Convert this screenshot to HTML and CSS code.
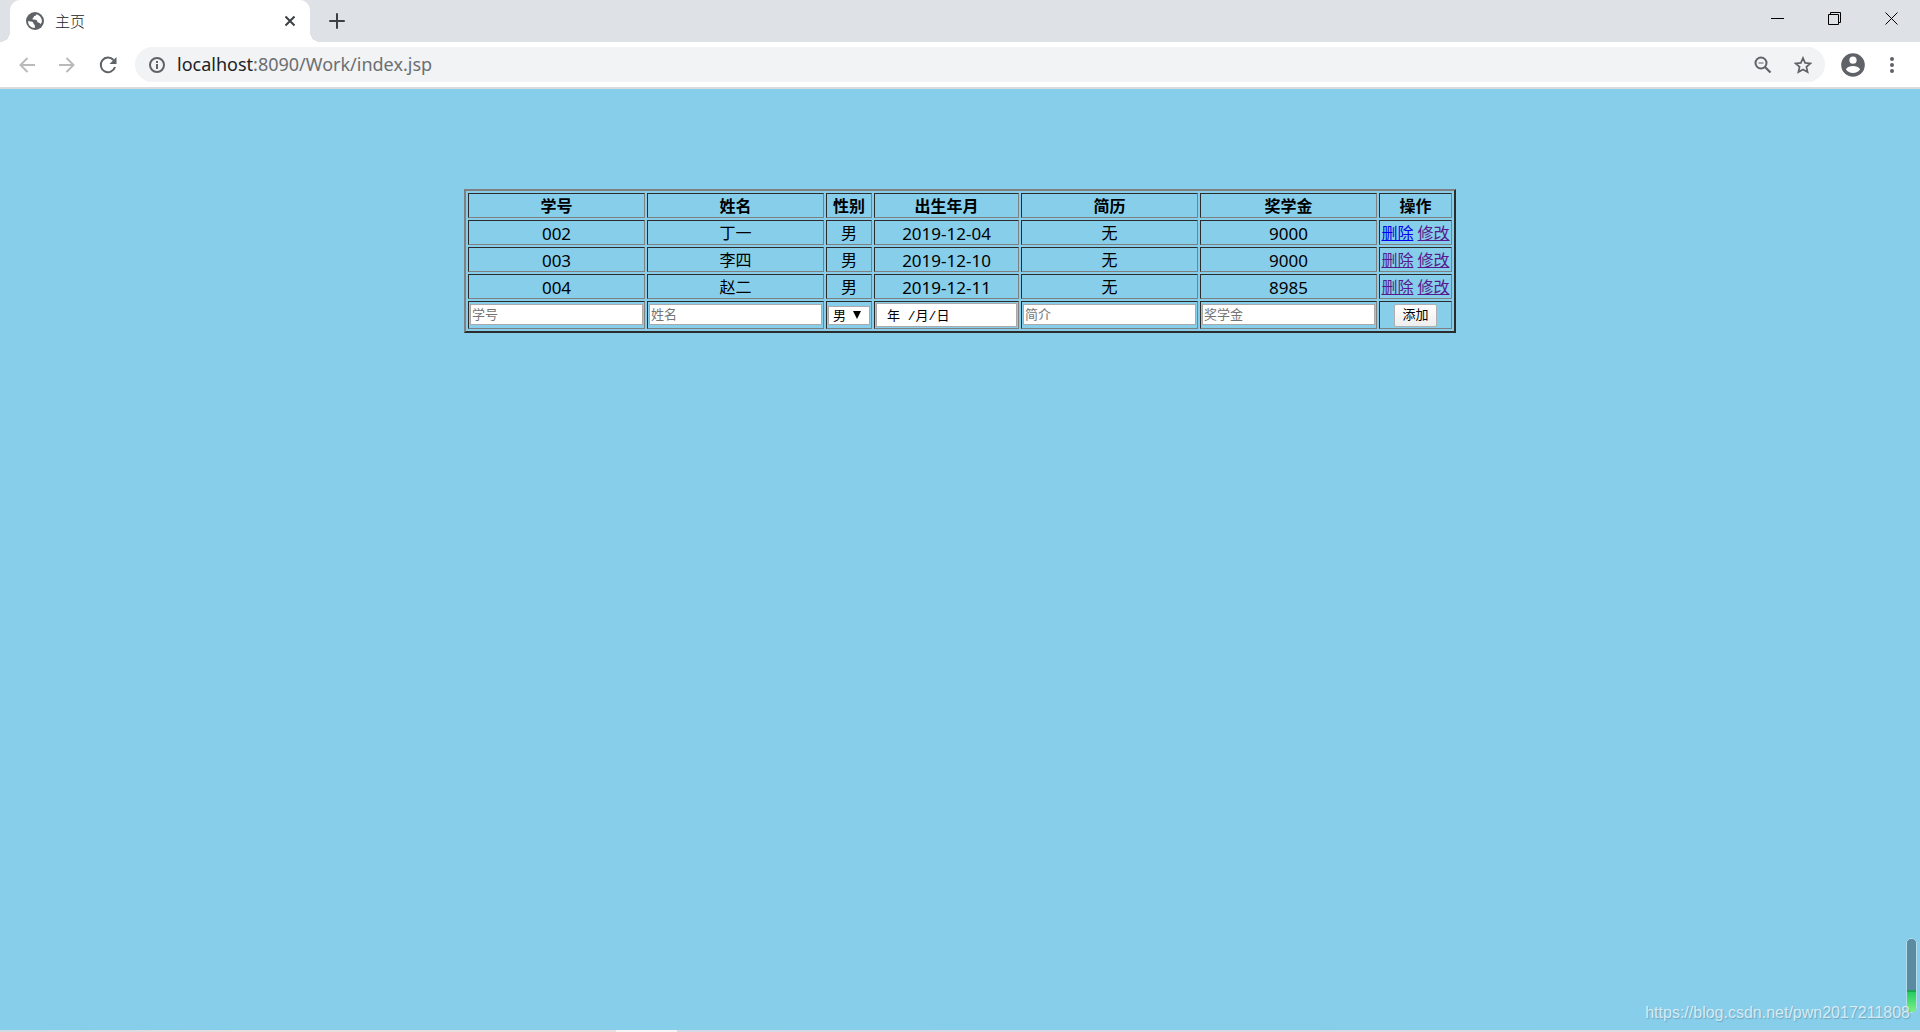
FILE: index.html
```html
<!DOCTYPE html>
<html lang="zh-CN">
<head>
<meta charset="utf-8">
<title>主页</title>
<link rel="stylesheet" href="styles.css">
</head>
<body>
<div class="window">
  <header class="tabstrip">
    <div class="tab">
      <svg class="globe" viewBox="0 0 18 18" width="18" height="18"><circle cx="9" cy="9" r="9" fill="#5f6368"/><path d="M2 9.2c2 .1 4.200 .1 5 1 .7.8.2 1.800 1.200 2.300.8.5.8 1.300.6 3.400C4.900 15.900 2 12.800 2 9.200zM10.500 2.200c-.3 1.300-.7 1.500-2 1.800-.9.300-.6 1.500-1.500 1.900-.7.4-.6 1.400.1 1.600 1.400.3 3.200-.1 3.900 1.100.6 1-.1 1.900 1.300 2 1.200.1 1.700.6 2 1.700 1-1.200 1.600-2 1.600-3.300 0-3.300-2.300-6-5.400-6.800z" fill="#fff"/></svg>
      <span class="tab-title">主页</span>
      <button class="icon-button" aria-label="关闭标签页"><svg viewBox="0 0 12 12" width="12" height="12"><path d="M1.500 1.500l9 9M10.500 1.500l-9 9" stroke="#3c4043" stroke-width="2"/></svg></button>
    </div>
    <button class="icon-button new-tab" aria-label="新标签页"><svg viewBox="0 0 16 16" width="16" height="16"><path d="M8 1v14M1 8h14" stroke="#3c4043" stroke-width="2" stroke-linecap="round"/></svg></button>
    <div class="window-buttons">
      <button class="icon-button" aria-label="最小化"><svg viewBox="0 0 13 13" width="13" height="13"><path d="M0 6.500h13" stroke="#000"/></svg></button>
      <button class="icon-button" aria-label="还原"><svg viewBox="0 0 13 13" width="13" height="13"><path d="M.5 2.500h10v10H.5zM2.500 2.500v-2h10v10h-2" fill="none" stroke="#000"/></svg></button>
      <button class="icon-button" aria-label="关闭"><svg viewBox="0 0 13 13" width="13" height="13"><path d="M.5.5l12 12M12.500.5l-12 12" stroke="#000"/></svg></button>
    </div>
  </header>
  <nav class="toolbar">
    <button class="icon-button" aria-label="后退"><svg viewBox="0 0 16 16" width="16" height="16"><path d="M16 8H1.500M8.500 1L1.500 8l7 7" fill="none" stroke="#bababa" stroke-width="2"/></svg></button>
    <button class="icon-button" aria-label="前进"><svg viewBox="0 0 16 16" width="16" height="16"><path d="M0 8h14.500M7.500 1l7 7-7 7" fill="none" stroke="#bababa" stroke-width="2"/></svg></button>
    <button class="icon-button" aria-label="重新加载"><svg viewBox="0 0 18 18" width="18" height="18"><path d="M14.500 4A7.300 7.300 0 1 0 16 11" fill="none" stroke="#5f6368" stroke-width="2"/><path d="M17.500 1v7h-7z" fill="#5f6368"/></svg></button>
    <div class="address">
      <svg viewBox="0 0 16 16" width="16" height="16"><circle cx="8" cy="8" r="7" fill="none" stroke="#5f6368" stroke-width="2"/><path d="M8 7v5M8 4v2" stroke="#5f6368" stroke-width="2"/></svg>
      <span class="url"><b class="host">localhost</b>:8090/Work/index.jsp</span>
      <button class="icon-button" aria-label="缩放"><svg viewBox="0 0 18 18" width="18" height="18"><circle cx="7" cy="7" r="5.500" fill="none" stroke="#5f6368" stroke-width="2"/><path d="M4.500 7h5" stroke="#5f6368"/><path d="M11 11l5.500 5.500" stroke="#5f6368" stroke-width="2.200"/></svg></button>
      <button class="icon-button" aria-label="收藏"><svg viewBox="0 0 18 18" width="18" height="18"><path d="M9 2l2.100 4.900 5.300.5-4 3.500 1.200 5.200L9 13.400l-4.600 2.700 1.200-5.200-4-3.500 5.300-.5z" fill="none" stroke="#5f6368" stroke-width="1.700"/></svg></button>
    </div>
    <button class="icon-button" aria-label="用户"><svg viewBox="0 0 24 24" width="24" height="24"><circle cx="12" cy="12" r="11.800" fill="#5f6368"/><circle cx="12" cy="7.200" r="3.600" fill="#fff"/><path d="M4.900 16.200c1.400-2.200 4.200-3.300 7.100-3.300s5.700 1.100 7.100 3.300A8.500 8.500 0 0 1 12 20a8.500 8.500 0 0 1-7.100-3.800z" fill="#fff"/></svg></button>
    <button class="icon-button" aria-label="菜单"><svg viewBox="0 0 4 16" width="4" height="16"><g fill="#5f6368"><circle cx="2" cy="2" r="2"/><circle cx="2" cy="8" r="2"/><circle cx="2" cy="14" r="2"/></g></svg></button>
  </nav>
  <main class="page">
    <form class="student-form">
      <table class="students">
        <colgroup><col class="wide"><col class="wide"><col class="sex"><col class="date"><col class="wide"><col class="wide"><col class="actions"></colgroup>
        <tr><th>学号</th><th>姓名</th><th>性别</th><th>出生年月</th><th>简历</th><th>奖学金</th><th>操作</th></tr>
        <tr><td>002</td><td>丁一</td><td>男</td><td>2019-12-04</td><td>无</td><td>9000</td><td class="links"><a class="fresh" href="#">删除</a> <a href="#">修改</a></td></tr>
        <tr><td>003</td><td>李四</td><td>男</td><td>2019-12-10</td><td>无</td><td>9000</td><td class="links"><a href="#">删除</a> <a href="#">修改</a></td></tr>
        <tr><td>004</td><td>赵二</td><td>男</td><td>2019-12-11</td><td>无</td><td>8985</td><td class="links"><a href="#">删除</a> <a href="#">修改</a></td></tr>
        <tr class="entry">
          <td><input class="field" type="text" placeholder="学号" aria-label="学号"></td>
          <td><input class="field" type="text" placeholder="姓名" aria-label="姓名"></td>
          <td><div class="picker"><select class="select" aria-label="性别"><option>男</option><option>女</option></select></div></td>
          <td><input class="field date-field" type="text" value="年 /月/日" aria-label="出生年月"></td>
          <td><input class="field" type="text" placeholder="简介" aria-label="简介"></td>
          <td><input class="field" type="text" placeholder="奖学金" aria-label="奖学金"></td>
          <td><button class="add" type="button">添加</button></td>
        </tr>
      </table>
    </form>
  </main>
  <footer class="edge"><span class="edge-left"></span><span class="edge-mid"></span><span class="edge-right"></span></footer>
  <div class="meter"><div class="meter-level"></div></div>
  <div class="watermark">https://blog.csdn.net/pwn2017211808</div>
</div>
</body>
</html>
```
FILE: styles.css
```css
* { box-sizing: border-box; }
body { margin: 0; font-family: "Noto Sans", "Noto Sans CJK SC", sans-serif; }
.window { position: relative; display: flex; flex-direction: column; min-height: 100vh; background: skyblue; }
.icon-button { display: flex; align-items: center; justify-content: center; padding: 0; border: 0; background: none; }
.icon-button svg { display: block; }

.tabstrip { display: flex; height: 42px; padding-left: 10px; background: #dee1e6; }
.tab { position: relative; display: flex; align-items: center; gap: 11px; width: 300px; padding: 0 14px 0 16px; border-radius: 10px 10px 0 0; background: #fff; }
.tab::before, .tab::after { content: ""; position: absolute; bottom: 0; width: 10px; height: 10px; }
.tab::before { left: -10px; background: radial-gradient(circle at 0 0, transparent 10px, #fff 10px); }
.tab::after { right: -10px; background: radial-gradient(circle at 100% 0, transparent 10px, #fff 10px); }
.tab-title { flex: 1; padding-bottom: 2px; font-size: 15px; font-weight: 300; color: #202124; }
.new-tab { margin-left: 19px; }
.window-buttons { display: flex; gap: 44px; height: 36px; margin-left: auto; padding-right: 22px; }

.toolbar { display: flex; align-items: center; height: 47px; gap: 24px; padding: 0 26px 0 19px; border-bottom: 2px solid #d9dbdf; background: #fff; }
.address { display: flex; flex: 1; align-items: center; gap: 12px; height: 35px; margin: 0 -8px 0 -6px; padding: 0 13px 0 14px; border-radius: 18px; background: #f1f3f4; }
.address .icon-button { margin-left: 10px; }
.toolbar > .icon-button:last-child { margin-left: 1px; }
.url { flex: 1; padding-bottom: 2px; font-size: 18px; line-height: 24px; color: #6b6e72; }
.host { font-weight: 400; color: #202124; }

.page { display: flex; flex: 1; align-items: flex-start; justify-content: center; padding-top: 100px; }
.students { border: 2px solid; border-color: #808080 #2b2b2b #2b2b2b #808080; border-spacing: 2px; table-layout: fixed; width: 992px; }
.wide { width: 177px; }
.sex { width: 46px; }
.date { width: 145px; }
.actions { width: 73px; }
.students th, .students td { height: 25px; padding: 2px 1px 0; border: 1px solid; border-color: #2b2b2b #808080 #808080 #2b2b2b; text-align: center; font-size: 16px; line-height: 21px; white-space: nowrap; }
.students td { font-size: 17px; }
.students td:nth-child(2), .students td:nth-child(3), .students td:nth-child(5), .students td.links { font-size: 16px; }
.students a { color: #551a8b; }
.students a.fresh { color: #00e; }
.students .entry td { height: 28px; padding: 1px; }
.field { display: block; width: 100%; height: 21px; margin-bottom: 1px; padding: 0 1px 1px; border: 1px solid #a9a9a9; background: #fff; font-family: inherit; font-size: 13px; line-height: 17px; color: #000; }
.field::placeholder { color: #757575; }
.date-field { height: 24px; margin: 0; padding-left: 10px; font-family: "Liberation Mono", "Noto Sans CJK SC", monospace; }
.picker { display: grid; align-items: center; width: 42px; height: 19px; margin: 0 auto; }
.picker::after { content: ""; grid-area: 1 / 1; justify-self: end; width: 8px; height: 8px; margin-right: 9px; background: #000; clip-path: polygon(0 0, 100% 0, 50% 100%); pointer-events: none; }
.select { grid-area: 1 / 1; width: 42px; height: 19px; padding: 0 4px; border: 1px solid #a9a9a9; border-radius: 0; appearance: none; background: #fff; font-family: inherit; font-size: 13px; line-height: 17px; color: #000; }
.add { display: block; width: 43px; height: 23px; margin: 0 auto; padding: 0 0 1px; border: 1px solid #b0b0b0; border-radius: 2px; background: linear-gradient(#fff, #eee); font-family: inherit; font-size: 13px; line-height: 19px; color: #000; }

.edge { display: flex; height: 2px; }
.edge-left { flex: 616; background: linear-gradient(90deg, #d0dbe4, #e8dedd 40%); }
.edge-mid { flex: 61; background: #f6f4f5; }
.edge-right { flex: 1243; background: linear-gradient(90deg, #d6d9e6, #e0dbdf); }
.meter { position: absolute; right: 3px; bottom: 19px; display: flex; flex-direction: column; justify-content: flex-end; width: 11px; height: 75px; overflow: hidden; border: 1px solid #b5dcec; border-radius: 5px; background: #5b8ba1; }
.meter-level { height: 22px; border-top: 2px solid #1ba64f; background: linear-gradient(#25cc61, #7af384); }
.watermark { position: absolute; right: 10px; bottom: 9px; font-family: "Liberation Sans", Arial, sans-serif; font-size: 16px; line-height: 20px; color: rgba(255, 255, 255, .7); text-shadow: 1px 1px 1px rgba(70, 110, 130, .4); }
```
